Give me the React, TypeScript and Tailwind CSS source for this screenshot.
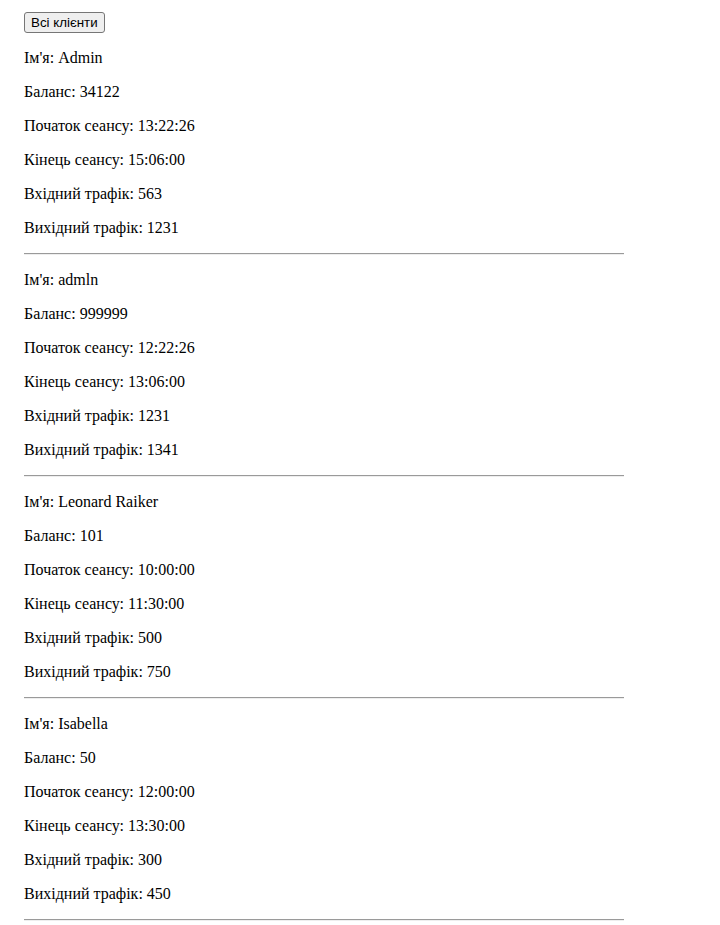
import React from 'react';

interface Client {
  name: string;
  balance: number;
  start: string;
  end: string;
  inTraffic: number;
  outTraffic: number;
}

const clients: Client[] = [
  { name: 'Admin', balance: 34122, start: '13:22:26', end: '15:06:00', inTraffic: 563, outTraffic: 1231 },
  { name: 'admln', balance: 999999, start: '12:22:26', end: '13:06:00', inTraffic: 1231, outTraffic: 1341 },
  { name: 'Leonard Raiker', balance: 101, start: '10:00:00', end: '11:30:00', inTraffic: 500, outTraffic: 750 },
  { name: 'Isabella', balance: 50, start: '12:00:00', end: '13:30:00', inTraffic: 300, outTraffic: 450 },
];

export default function App() {
  return (
    <div className="min-h-[925px] bg-white px-6 pt-3 text-black font-['Liberation_Serif',serif] text-base leading-[normal]">
      <button className="rounded-[3px] border border-[#767676] bg-[#efefef] px-[6px] py-[2px] font-['Liberation_Sans',Arial,sans-serif] text-[13.33px] leading-[normal] text-black hover:bg-[#e5e5e5]">
        Всі клієнти
      </button>
      <div className="w-[600px]">
        {clients.map((c) => (
          <div key={c.name}>
            <p className="my-4">Ім'я: {c.name}</p>
            <p className="my-4">Баланс: {c.balance}</p>
            <p className="my-4">Початок сеансу: {c.start}</p>
            <p className="my-4">Кінець сеансу: {c.end}</p>
            <p className="my-4">Вхідний трафік: {c.inTraffic}</p>
            <p className="my-4">Вихідний трафік: {c.outTraffic}</p>
            <hr className="my-2 h-0 border-t border-b border-t-[#9a9a9a] border-b-[#eeeeee]" />
          </div>
        ))}
      </div>
    </div>
  );
}
